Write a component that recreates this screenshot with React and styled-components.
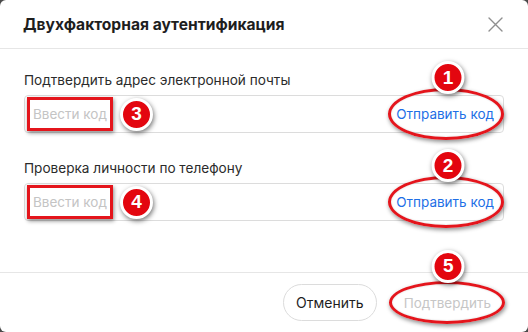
import React from 'react';
import styled, { createGlobalStyle } from 'styled-components';

const GlobalStyle = createGlobalStyle`
    html, body {
        margin: 0;
        padding: 0;
        background: #4a4a4a;
    }
    body {
        font-family: Inter, "Noto Sans", Arial, sans-serif;
        color: #222;
    }
`;

const Dialog = styled.div`
    width: 528px;
    height: 332px;
    background: #fff;
    border-radius: 6px;
    display: flex;
    flex-direction: column;
    overflow: hidden;
`;

const Header = styled.div`
    height: 48px;
    padding: 0 24px 0 23px;
    display: flex;
    align-items: center;
    justify-content: space-between;
    border-bottom: 1px solid #e6e6e6;
    flex-shrink: 0;
`;

const Title = styled.h2`
    margin: 0;
    font-size: 15.6px;
    font-weight: 700;
    color: #1e1e1e;
`;

const Close = styled.button`
    border: none;
    background: none;
    padding: 0;
    width: 20px;
    height: 20px;
    margin-right: -1px;
    display: flex;
    align-items: center;
    justify-content: center;
    color: #8f8f8f;
`;

const Body = styled.div`
    flex: 1;
    padding: 21px 24px 0;
    display: flex;
    flex-direction: column;
    gap: 25px;
`;

const Field = styled.div`
    display: flex;
    flex-direction: column;
    gap: 5px;
`;

const Label = styled.label`
    font-size: 13.6px;
    line-height: 20px;
    color: #2b2b2b;
`;

const InputBox = styled.div`
    height: 38px;
    box-sizing: border-box;
    border: 1px solid #dcdcdc;
    border-radius: 4px;
    display: flex;
    align-items: center;
    padding: 0 9px 0 2px;
`;

const Marked = styled.span`
    display: inline-flex;
    align-items: center;
    height: 34px;
    box-sizing: border-box;
    padding: 0 3px;
    border: 3px solid #e4151c;
    box-shadow: 1px 2px 4px rgba(0, 0, 0, 0.45);
    font-size: 13.5px;
    color: #c4c4c4;
`;

const Badge = styled.span`
    width: 33px;
    height: 33px;
    box-sizing: border-box;
    border-radius: 50%;
    border: 3px solid #fff;
    background: #e3060f;
    color: #fff;
    font-family: "Liberation Sans", Arial, sans-serif;
    font-weight: 700;
    font-size: 19px;
    display: inline-flex;
    align-items: center;
    justify-content: center;
    box-shadow: 1px 2px 5px rgba(0, 0, 0, 0.55);
    flex-shrink: 0;
`;

const SideBadge = styled(Badge)`
    margin-left: 7px;
`;

const TopBadge = styled(Badge)`
    position: absolute;
    left: 50%;
    top: 50%;
    margin-left: ${p => p.$dx || 0}px;
    transform: translate(-50%, -53px);
    z-index: 2;
`;

const Spacer = styled.span`
    flex: 1;
`;

const Ringed = styled.span`
    position: relative;
    display: inline-flex;
    align-items: center;
`;

const Ring = styled.span`
    position: absolute;
    left: ${p => p.$l}px;
    right: ${p => p.$r}px;
    top: ${p => p.$t}px;
    bottom: ${p => p.$t}px;
    border: 3px solid #e4151c;
    border-radius: 50%;
    box-shadow: 1px 2px 4px rgba(0, 0, 0, 0.45), inset 0 0 2px rgba(0, 0, 0, 0.2);
    pointer-events: none;
`;

const Link = styled.a`
    font-size: 13.5px;
    color: #1e6fe6;
    text-decoration: none;
    white-space: nowrap;
`;

const Footer = styled.div`
    height: 60px;
    flex-shrink: 0;
    border-top: 1px solid #e6e6e6;
    display: flex;
    align-items: center;
    justify-content: flex-end;
    gap: 14px;
    padding: 0 24px 0;
    box-sizing: border-box;
`;

const Button = styled.button`
    height: 37px;
    padding: 0 12px;
    border-radius: 19px;
    font-family: inherit;
    font-size: ${p => (p.$ghost ? 14 : 13.5)}px;
    border: 1px solid ${p => (p.$ghost ? '#dcdcdc' : 'transparent')};
    background: #fff;
    color: ${p => (p.$disabled ? '#c6c6c6' : '#1e1e1e')};
`;

const CloseIcon = () => (
    <svg width="15" height="15" viewBox="0 0 15 15" fill="none">
        <path d="M1 1L14 14M14 1L1 14" stroke="currentColor" strokeWidth="1.4" strokeLinecap="round" />
    </svg>
);

const CodeField = ({ label, inputBadge, linkBadge }) => (
    <Field>
        <Label>{label}</Label>
        <InputBox>
            <Marked>Ввести код</Marked>
            <SideBadge>{inputBadge}</SideBadge>
            <Spacer />
            <Ringed>
                <Ring $l={-8} $r={-10} $t={-18} />
                <TopBadge $dx={3}>{linkBadge}</TopBadge>
                <Link href="#">Отправить код</Link>
            </Ringed>
        </InputBox>
    </Field>
);

const App = () => {
    return (
        <>
            <GlobalStyle />
            <Dialog>
                <Header>
                    <Title>Двухфакторная аутентификация</Title>
                    <Close aria-label="Закрыть"><CloseIcon /></Close>
                </Header>
                <Body>
                    <CodeField label="Подтвердить адрес электронной почты" inputBadge="3" linkBadge="1" />
                    <CodeField label="Проверка личности по телефону" inputBadge="4" linkBadge="2" />
                </Body>
                <Footer>
                    <Button $ghost>Отменить</Button>
                    <Ringed>
                        <Ring $l={-2} $r={-1} $t={-3} />
                        <TopBadge $dx={1}>5</TopBadge>
                        <Button $disabled>Подтвердить</Button>
                    </Ringed>
                </Footer>
            </Dialog>
        </>
    );
};

export default App;
